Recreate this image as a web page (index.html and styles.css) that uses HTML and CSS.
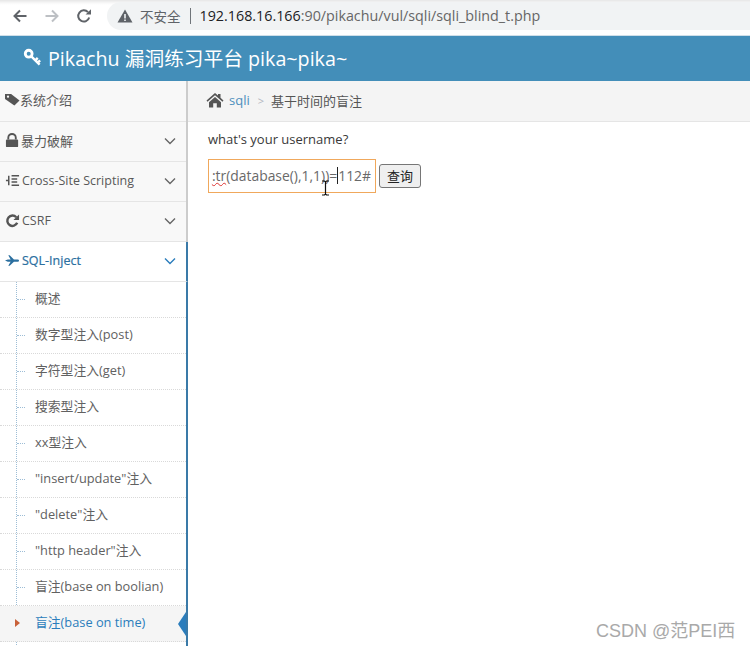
FILE: index.html
```html
<!DOCTYPE html>
<html lang="zh">
<head>
<meta charset="utf-8">
<title>Pikachu</title>
<link rel="stylesheet" href="styles.css">
</head>
<body>
<div class="chrome">
  <svg class="nav-icon back" viewBox="0 0 16 16"><path d="M14.5 8H2.5M8 2.5L2.5 8 8 13.5" fill="none" stroke="#5f6368" stroke-width="2"/></svg>
  <svg class="nav-icon fwd" viewBox="0 0 16 16"><path d="M1.5 8H13.5M8 2.5L13.5 8 8 13.5" fill="none" stroke="#bdc0c4" stroke-width="2"/></svg>
  <svg class="nav-icon reload" viewBox="0 0 16 16"><path d="M13.2 9.5A5.6 5.6 0 1 1 12 4.2" fill="none" stroke="#5f6368" stroke-width="2"/><path d="M9.6 6.6H15V1.2z" fill="#5f6368"/></svg>
  <div class="omnibox">
    <svg class="warn" viewBox="0 0 16 16"><path d="M8 1.5L15.5 14.5H.5z" fill="#5f6368"/><path d="M7.2 6h1.6v4.6H7.2zM7.2 11.4h1.6v1.5H7.2z" fill="#f1f3f4"/></svg>
    <span class="insecure">不安全</span>
    <span class="sep"></span>
    <span class="url"><span class="host">192.168.16.166</span>:90/pikachu/vul/sqli/sqli_blind_t.php</span>
  </div>
</div>
<header class="brand">
  <svg class="key" viewBox="0 0 20 20"><circle cx="6" cy="6" r="3.6" fill="none" stroke="#fff" stroke-width="3"/><path d="M8.5 8.5L17.5 17.5M13 13l2.5-2.5M15.5 15.500l2.500-2.500" fill="none" stroke="#fff" stroke-width="2.600"/></svg>
  <span>Pikachu 漏洞练习平台 pika~pika~</span>
</header>
<div class="layout">
  <nav class="sidebar">
    <a class="top-item first"><svg class="mi tag" viewBox="0 0 16 16"><path d="M0 2h6.500l9 7-5.500 5.500L0 7.500z" fill="#555"/><circle cx="3.200" cy="5" r="1.200" fill="#f8f8f8"/></svg><span>系统介绍</span></a>
    <a class="top-item"><svg class="mi" viewBox="0 0 16 16"><path d="M3.500 7V5a4 4 0 0 1 8 0v2" fill="none" stroke="#555" stroke-width="2"/><rect x="0" y="7" width="13" height="8" rx="1" fill="#555" transform="translate(1)"/></svg><span class="gap">暴力破解</span><svg class="chev" viewBox="0 0 12 8"><path d="M1 1.500l5 5 5-5" fill="none" stroke="#666" stroke-width="1.400"/></svg></a>
    <a class="top-item"><svg class="mi" viewBox="0 0 16 16"><path d="M4 3v10M1 8h3M7 3h8M7 6.500h6M7 9.500h6M7 13h8" fill="none" stroke="#555" stroke-width="1.600"/></svg><span class="gap small">Cross-Site Scripting</span><svg class="chev" viewBox="0 0 12 8"><path d="M1 1.500l5 5 5-5" fill="none" stroke="#666" stroke-width="1.400"/></svg></a>
    <a class="top-item"><svg class="mi" viewBox="0 0 16 16"><path d="M13 10.500A5.500 5.500 0 1 1 12 4.500" fill="none" stroke="#555" stroke-width="2.600"/><path d="M9 7.500h6v-6z" fill="#555"/></svg><span class="gap small">CSRF</span><svg class="chev" viewBox="0 0 12 8"><path d="M1 1.500l5 5 5-5" fill="none" stroke="#666" stroke-width="1.400"/></svg></a>
    <a class="top-item open"><svg class="mi" viewBox="0 0 16 16"><path d="M0 8l3-1.200h3L3.500 2.500h1.500L9.500 6.800h4c2 0 2 2.400 0 2.400h-4L5 13.500H3.500L6 9.200H3z" fill="#2b6f9f"/></svg><span class="gap small">SQL-Inject</span><svg class="chev" viewBox="0 0 12 8"><path d="M1 1.500l5 5 5-5" fill="none" stroke="#2b7dbc" stroke-width="1.400"/></svg></a>
    <ul class="submenu">
      <li class="sub">概述</li>
      <li class="sub">数字型注入(post)</li>
      <li class="sub">字符型注入(get)</li>
      <li class="sub">搜索型注入</li>
      <li class="sub">xx型注入</li>
      <li class="sub">"insert/update"注入</li>
      <li class="sub">"delete"注入</li>
      <li class="sub">"http header"注入</li>
      <li class="sub">盲注(base on boolian)</li>
      <li class="sub active">盲注(base on time)</li>
    </ul>
  </nav>
  <main class="content">
    <div class="crumbs">
      <svg class="home" viewBox="0 0 18 16"><path d="M9 1L0.500 8.500l1 1.200L9 3.200l7.500 6.500 1-1.200L14.500 5.800V2h-2.500v1.600zM3 10.200L9 5l6 5.200V15.500h-4.200v-4.200H7.200v4.200H3z" fill="#555"/></svg>
      <a class="crumb-link">sqli</a>
      <span class="crumb-sep">&gt;</span>
      <span class="crumb-cur">基于时间的盲注</span>
    </div>
    <div class="page">
      <p class="question">what's your username?</p>
      <form class="query">
        <div class="input"><span class="squiggle">:tr</span>(database(),1,1))=<span class="caret"></span>112#</div>
        <button class="btn" type="button">查询</button>
      </form>
    </div>
  </main>
</div>
<svg class="ibeam" viewBox="0 0 9 16"><path d="M1 1h2.500l1 1 1-1H8M4.500 2v12M1 15h2.500l1-1 1 1H8" fill="none" stroke="#111" stroke-width="1.200"/></svg>
<div class="watermark">CSDN @范PEI西</div>
</body>
</html>
```
FILE: styles.css
```css
* { box-sizing: border-box; }
html, body { margin: 0; height: 646px; overflow: hidden; background: #fff; }
body { position: relative; font-family: "Open Sans", "Noto Sans CJK SC", sans-serif; font-size: 13px; color: #393939; }
.chrome { height: 36px; display: flex; align-items: flex-start; padding: 8px 0 0 12px; background: linear-gradient(#e6e6e6 0, #f8f8f8 3px, #fff 5px); border-bottom: 1px solid #cfdfe9; }
.nav-icon { width: 16px; height: 16px; flex: none; }
.fwd { margin-left: 16px; }
.reload { margin-left: 16px; }
.omnibox { margin: -6px 0 0 15px; flex: 1; height: 28px; background: #f1f3f4; border-radius: 14px 0 0 14px; display: flex; align-items: center; padding-left: 10px; }
.warn { width: 16px; height: 16px; flex: none; }
.insecure { margin: -1px 0 0 7px; font-size: 13.500px; color: #5f6368; }
.sep { width: 1px; height: 16px; background: #70757a; margin: 0 9px; }
.url { margin-top: -2px; font-family: "Open Sans", sans-serif; font-size: 14.300px; color: #666; white-space: nowrap; }
.host { color: #202124; }
.brand { height: 45px; background: #438eb9; color: #fff; display: flex; align-items: center; padding: 0 0 2px 23px; font-size: 19.700px; }
.key { width: 19px; height: 19px; margin-right: 6px; flex: none; }
.layout { display: flex; height: 565px; }
.sidebar { width: 188px; flex: none; background: #f2f2f2; border-right: 2px solid #cccccc; position: relative; }
.top-item { display: flex; align-items: center; height: 40px; padding: 0 10px 2px 5px; background: #f8f8f8; border-bottom: 1px solid #e5e5e5; color: #585858; font-size: 13px; }
.top-item.first { height: 41px; padding-bottom: 3px; }
.top-item.open { background: #fff; color: #2b6f9f; position: relative; margin-right: -2px; border-right: 2px solid #3a7aa8; padding-right: 10px; }
.mi { width: 15px; height: 15px; flex: none; }
.gap { margin-left: 1px; flex: 1; }
.small { font-size: 12.500px; margin-left: 2px; }
.top-item.open .gap { -webkit-text-stroke: .2px #2b6f9f; }
.chev { width: 12px; height: 8px; flex: none; margin-left: auto; }
.submenu { list-style: none; margin: 0 -2px 0 0; padding: 0; background: #fff; border-right: 2px solid #3a7aa8; position: relative; height: 365px; }
.submenu::before { content: ""; position: absolute; left: 16px; top: 0; bottom: 0; border-left: 1px dotted #9dbdd6; }
.sub { position: relative; height: 36px; line-height: 32px; padding-left: 35px; font-size: 12.800px; color: #616161; border-bottom: 1px dotted #d9d9d9; }
.sub::before { content: ""; position: absolute; left: 17px; top: 17px; width: 8px; border-top: 1px dotted #9dbdd6; }
.sub.active { background: #f5f5f5; color: #2b7dbc; }
.sub.active::before { width: 0; height: 0; top: 13px; left: 15px; border-top: 4px solid transparent; border-bottom: 4px solid transparent; border-left: 5px solid #c86139; }
.sub.active::after { content: ""; position: absolute; right: 0; top: 6px; border-top: 12px solid transparent; border-bottom: 12px solid transparent; border-right: 8px solid #2b7dbc; }
.content { flex: 1; min-width: 0; }
.crumbs { height: 41px; background: #f4f4f4; border-bottom: 1px solid #e5e5e5; display: flex; align-items: center; padding: 0 0 2px 18px; font-size: 13px; }
.home { width: 18px; height: 16px; flex: none; margin-right: 5px; }
.crumb-link { color: #4c8fbd; font-size: 13px; }
.crumb-sep { color: #b2b6bf; margin: 0 7px 0 8px; font-size: 11px; }
.crumb-cur { color: #555; }
.page { padding: 8px 0 0 20px; }
.question { margin: 0; font-size: 13px; line-height: 18px; color: #393939; }
.query { display: flex; align-items: center; margin-top: 11px; }
.input { width: 168px; height: 34px; border: 1px solid #f0a85c; display: flex; align-items: center; justify-content: flex-end; padding: 0 4px 2px 0; font-size: 13.900px; color: #696969; white-space: nowrap; overflow: hidden; background: #fff; }
.squiggle { text-decoration: underline wavy #d33; text-decoration-thickness: 1px; }
.caret { width: 1px; height: 17px; background: #222; }
.btn { margin-left: 3px; width: 42px; height: 24px; padding: 0 0 2px; border: 1px solid #767676; border-radius: 3px; background: #efefef; font-family: inherit; font-size: 13px; color: #222; }
.ibeam { position: absolute; left: 321px; top: 180px; width: 9px; height: 16px; }
.watermark { position: absolute; left: 596px; top: 616px; font-family: "Liberation Sans", "Noto Sans CJK SC", sans-serif; font-size: 18px; color: #a9a9a9; }
```
